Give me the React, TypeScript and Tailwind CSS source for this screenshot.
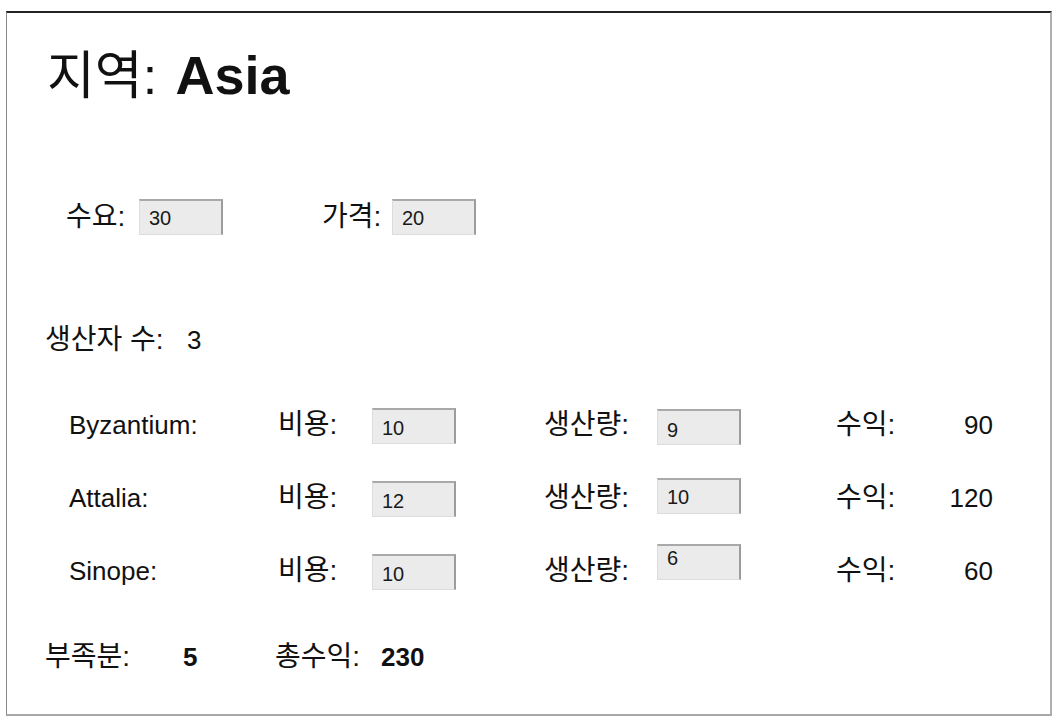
import React from 'react'

interface Producer {
  name: string
  cost: number
  output: number
  profit: number
  outputPad: string
  outputShift: string
}

const producers: Producer[] = [
  { name: 'Byzantium', cost: 10, output: 9, profit: 90, outputPad: 'pt-[5px]', outputShift: 'mt-[3px]' },
  { name: 'Attalia', cost: 12, output: 10, profit: 120, outputPad: 'pt-0', outputShift: '-mt-[4px]' },
  { name: 'Sinope', cost: 10, output: 6, profit: 60, outputPad: '-mt-[10px]', outputShift: '-mt-[18px]' },
]

const Field: React.FC<{ value: number; className?: string; textClass?: string }> = (props) => {
  return (
    <div
      className={`flex h-[36px] w-[84px] items-center bg-[#ebebeb] pl-[9px] text-[20px] text-[#1a1a1a] border-t-2 border-r-2 border-t-[#a9a9a9] border-r-[#9c9c9c] border-l border-b border-l-[#dcdcdc] border-b-[#dcdcdc] ${props.className ?? ''}`}
    >
      <span className={props.textClass}>{props.value}</span>
    </div>
  )
}

// korean labels come out a little narrower than the screenshot, bump them
const ko = 'text-[28px]'

const App: React.FC = () => {
  return (
    <div className="min-h-[726px] bg-white pl-[6px] pt-[11px] font-['Liberation_Sans','Noto_Sans_CJK_KR',sans-serif] text-[#111]">
      <div className="flex h-[705px] w-[1046px] flex-col border-t-2 border-l border-t-[#222] border-l-[#8a8a8a] border-r-2 border-b-2 border-r-[#b0b0b0] border-b-[#a8a8a8]">
        <div className="mt-[32px] h-[60px] pl-[40px] text-[52px] leading-[60px]">
          지역: <span className="ml-[4px] text-[54px] font-bold">Asia</span>
        </div>

        <div className="mt-[92px] flex h-[40px] items-center pl-[59px] text-[26px]">
          <span className={`w-[73px] ${ko}`}>수요:</span>
          <Field value={30} />
          <span className={`ml-[99px] w-[70px] ${ko}`}>가격:</span>
          <Field value={20} />
        </div>

        <div className="mt-[83px] flex h-[40px] items-center pl-[38px] text-[26px]">
          <span className={`w-[142px] ${ko}`}>생산자 수:</span>
          <span>3</span>
        </div>

        <div className="mt-[45px] flex flex-col gap-[33px]">
          {producers.map((p) => (
            <div className="flex h-[40px] items-center pl-[62px] text-[26px]" key={p.name}>
              <span className="w-[209px]">{p.name}:</span>
              <span className={`w-[94px] ${ko}`}>비용:</span>
              <Field value={p.cost} className="mt-[2px]" textClass="pt-[3px]" />
              <span className={`ml-[88px] w-[113px] ${ko}`}>생산량:</span>
              <Field value={p.output} className={p.outputShift} textClass={p.outputPad} />
              <div className="ml-[95px] flex w-[157px] items-center justify-between">
                <span className={ko}>수익:</span>
                <span>{p.profit}</span>
              </div>
            </div>
          ))}
        </div>

        <div className="mt-[46px] flex h-[40px] items-center pl-[38px] text-[26px]">
          <span className={`w-[138px] ${ko}`}>부족분:</span>
          <span className="w-[92px] font-bold">5</span>
          <span className={`w-[106px] ${ko}`}>총수익:</span>
          <span className="font-bold">230</span>
        </div>
      </div>
    </div>
  )
}

export default App
